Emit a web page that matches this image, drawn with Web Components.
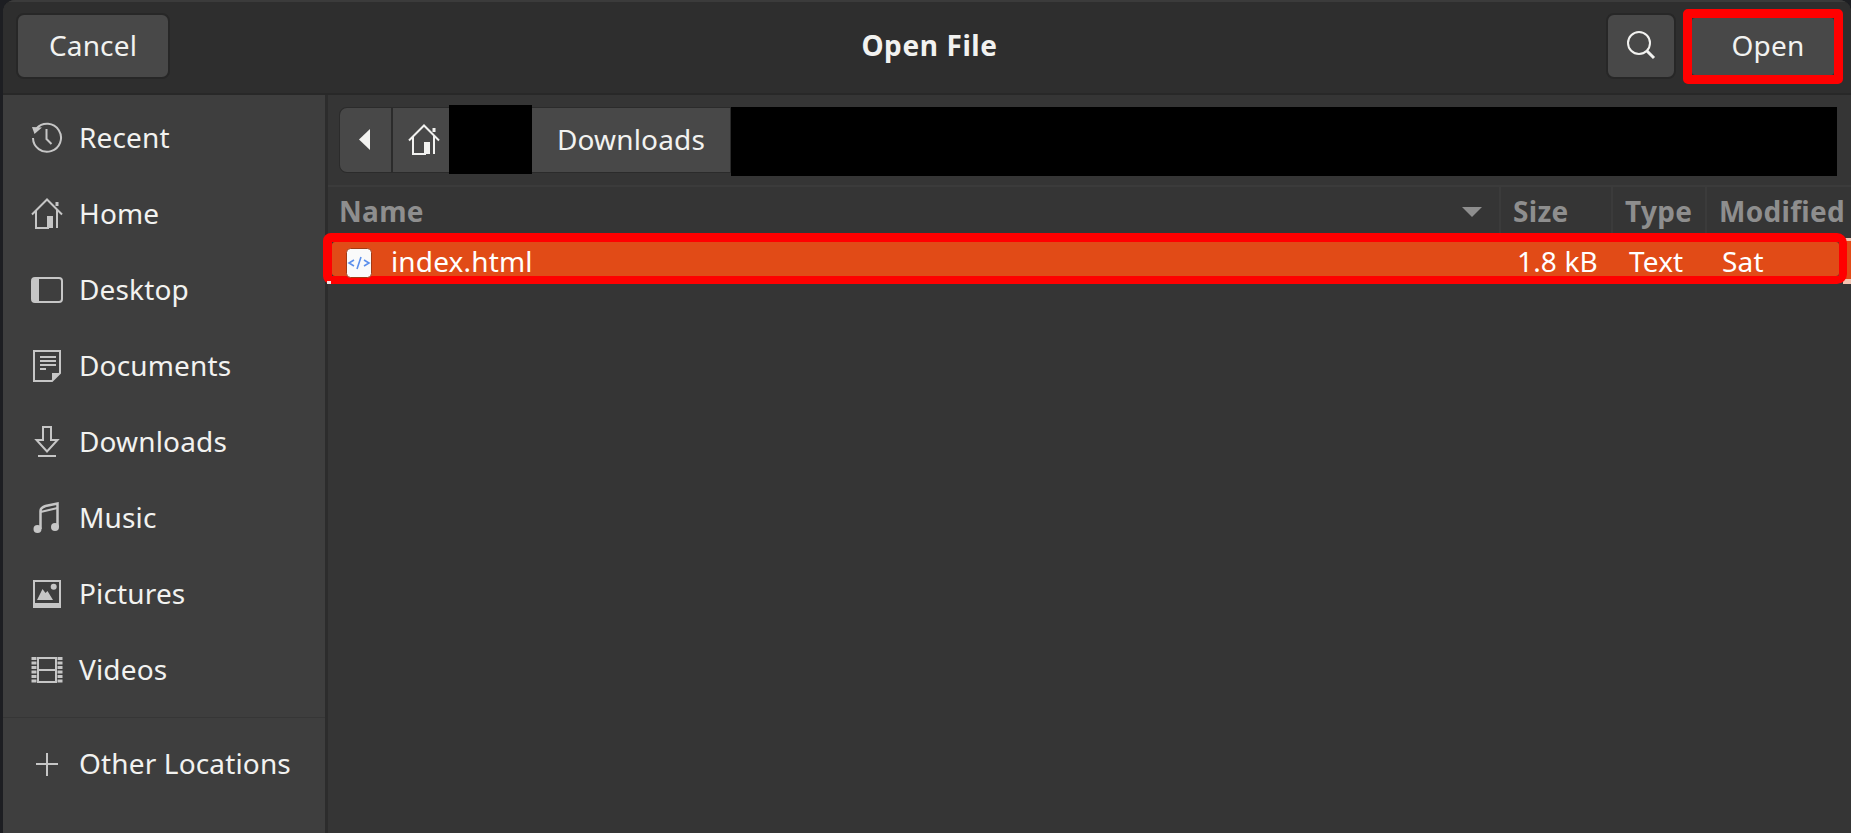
<!DOCTYPE html>
<html><head><meta charset="utf-8"><title>Open File</title>
<style>
html,body{margin:0;height:100%;background:#1d1e22;overflow:hidden}
body{font-family:"Noto Sans","Open Sans",sans-serif;font-size:28px;letter-spacing:.15px;color:#f2f2f0}
</style></head><body>
<file-dialog>
  <dlg-button slot="start" w="154">Cancel</dlg-button>
  <span slot="title">Open File</span>
  <dlg-button slot="end" w="70" icon><svg viewBox="0 0 30 30" width="30" height="30" fill="none" stroke="#f2f2f0" stroke-width="2"><circle cx="13" cy="13" r="11"/><path d="M21 21l7 7" stroke-width="3"/></svg></dlg-button>
  <dlg-button slot="end" w="160" marked>Open</dlg-button>

  <place-row slot="side" icon="recent">Recent</place-row>
  <place-row slot="side" icon="home">Home</place-row>
  <place-row slot="side" icon="desktop">Desktop</place-row>
  <place-row slot="side" icon="documents">Documents</place-row>
  <place-row slot="side" icon="downloads">Downloads</place-row>
  <place-row slot="side" icon="music">Music</place-row>
  <place-row slot="side" icon="pictures">Pictures</place-row>
  <place-row slot="side" icon="videos">Videos</place-row>
  <place-row slot="other" icon="plus">Other Locations</place-row>

  <path-bar slot="path"></path-bar>
  <file-head slot="list"></file-head>
  <file-row slot="list"></file-row>
</file-dialog>

<script>
const G='#c6c6c6';
const ICONS={
recent:`<svg width="32" height="32" viewBox="0 0 32 32" fill="none" stroke="${G}" stroke-width="2"><path d="M5.5 6.500A14 14 0 1 1 2 16"/><path d="M1 5l10 .5-7.500 6.500z" fill="${G}" stroke="none"/><path d="M15.500 7v10l5 5"/></svg>`,
home:`<svg width="32" height="32" viewBox="0 0 32 32" fill="none" stroke="${G}" stroke-width="2"><path d="M1 16.500L16 1.500l15 15"/><path d="M26 4v4" stroke-width="3"/><path d="M5 13v17h13"/><path d="M26 12v18"/><rect x="16" y="18" width="6" height="12" fill="${G}" stroke="none"/></svg>`,
desktop:`<svg width="32" height="32" viewBox="0 0 32 32" fill="none" stroke="${G}" stroke-width="2"><rect x="1" y="4" width="30" height="24" rx="3"/><path d="M3 4h5v24H3a2 2 0 0 1-2-2V6a2 2 0 0 1 2-2z" fill="${G}" stroke="none"/></svg>`,
documents:`<svg width="32" height="32" viewBox="0 0 32 32" fill="none" stroke="${G}" stroke-width="2"><path d="M3 1h26v22l-8 8H3z"/><path d="M21 31v-8h8z" fill="${G}" stroke="none"/><path d="M9 7h16M9 11h16M9 15h16M9 19h6"/></svg>`,
downloads:`<svg width="32" height="32" viewBox="0 0 32 32" fill="none" stroke="${G}" stroke-width="2"><path d="M12 1h8v13h6.500L16 25.500 5.500 14H12z"/><path d="M7 30h18"/></svg>`,
music:`<svg width="32" height="32" viewBox="0 0 32 32" fill="none" stroke="${G}" stroke-width="2.500"><circle cx="6.500" cy="27" r="4" fill="${G}" stroke="none"/><circle cx="24" cy="25" r="4" fill="${G}" stroke="none"/><path d="M9.500 27V9c0-3 2-4 5-5l12-2.500V25"/><path d="M9.500 10l17-4" stroke-width="2"/></svg>`,
pictures:`<svg width="32" height="32" viewBox="0 0 32 32" fill="none" stroke="${G}" stroke-width="2"><path d="M3 3h26v26H3z"/><path d="M2 25h28v5H2z" fill="${G}" stroke="none"/><path d="M6 22l5.500-11 3 4 2-2 5.500 9z" fill="${G}" stroke="none"/><circle cx="22.700" cy="8.700" r="3" fill="${G}" stroke="none"/></svg>`,
videos:`<svg width="32" height="32" viewBox="0 0 32 32" fill="none" stroke="${G}" stroke-width="2"><path d="M7 4h18v24H7zM7 16h18"/><path d="M3 3v26M29 3v26" stroke-width="5" stroke-dasharray="3 1.500"/></svg>`,
plus:`<svg width="32" height="32" viewBox="0 0 32 32" fill="none" stroke="${G}" stroke-width="2"><path d="M16 5v23M5 16h22"/></svg>`
};
function def(name,css,html){
  customElements.define(name,class extends HTMLElement{
    connectedCallback(){
      if(this.shadowRoot)return;
      const r=this.attachShadow({mode:'open'});
      r.innerHTML=`<style>${css}</style>${typeof html==='function'?html(this):html}`;
    }
  });
}
def('file-dialog',`
:host{display:flex;flex-direction:column;height:833px;margin-left:3px;border-radius:12px 12px 0 0;overflow:hidden;background:#353535;box-sizing:border-box}
header{height:93px;flex:none;background:#2e2e2e;border-top:2px solid #3b3b3b;box-sizing:border-box;display:grid;grid-template-columns:1fr auto 1fr;align-items:center;padding:0 8px 3px 13px}
.s{display:flex;align-items:center}.e{display:flex;align-items:center;justify-content:flex-end;gap:7px}
.t{font-weight:700;letter-spacing:.6px;padding:0 0 3px 0}
.rule{height:2px;background:#282828;flex:none}
.body{flex:1;display:flex;min-height:0}
aside{width:325px;flex:none;box-sizing:border-box;background:#3e3e3e;border-right:3px solid #2c2c2c;padding-top:5px;display:flex;flex-direction:column}
.sep{height:1px;background:#363636;margin:9px 0 8px}
main{flex:1;min-width:0;display:flex;flex-direction:column}
.path{height:92px;flex:none;box-sizing:border-box;padding:12px 0 0 11px;border-bottom:2px solid #3b3b3b}
`,`<header><div class="s"><slot name="start"></slot></div><div class="t"><slot name="title"></slot></div><div class="e"><slot name="end"></slot></div></header>
<div class="rule"></div>
<div class="body"><aside><slot name="side"></slot><div class="sep"></div><slot name="other"></slot></aside>
<main><div class="path"><slot name="path"></slot></div><slot name="list"></slot></main></div>`);

def('dlg-button',`
:host{display:block;flex:none}
.m{box-sizing:border-box}
:host([marked]) .m{border:9px solid #ff0000;border-radius:5px;height:75px}
b{font-weight:400;display:flex;align-items:center;justify-content:center;box-sizing:border-box;height:66px;background:#484848;border:2px solid #272727;border-radius:8px;width:100%;padding-bottom:3px}
:host([marked]) b{height:57px;border:0;border-radius:3px;padding:0 0 2px 10px}
`,h=>`<div class="m" style="width:${h.getAttribute('w')}px"><b><slot></slot></b></div>`);

def('place-row',`
:host{display:flex;align-items:center;height:76px;padding-left:28px;box-sizing:border-box}
.i{width:32px;height:32px;flex:none;margin-right:16px;display:block}
.l{margin-top:-3px}
`,h=>`<span class="i">${ICONS[h.getAttribute('icon')]}</span><span class="l"><slot></slot></span>`);

def('path-bar',`
:host{display:flex;align-items:stretch;height:66px}
.seg{background:#484848;display:flex;align-items:center;justify-content:center;box-sizing:border-box;border:1px solid #2b2b2b}
.back{width:54px;border-radius:8px 0 0 8px;border-right:2px solid #2b2b2b;padding-right:2px}
.homeb{width:56px;border-left:0;border-right:0;padding-left:6px}
.dl{width:199px;border-left:0;padding-bottom:2px}
.blk{background:#000;flex:none;margin:-2px 0 -1px}
.b1{width:83px}.b2{width:1106px;margin:0 0 -3px}
`,`<div class="seg back"><svg width="12" height="22" viewBox="0 0 12 22"><path d="M11 0v21L0 10.500z" fill="#f2f2f0"/></svg></div>
<div class="seg homeb"><svg width="32" height="32" viewBox="0 0 32 32" fill="none" stroke="#f2f2f0" stroke-width="2"><path d="M1 16.500L16 1.500l15 15"/><path d="M26 4v4" stroke-width="3"/><path d="M5 13v17h13"/><path d="M26 12v18"/><rect x="16" y="18" width="6" height="12" fill="#f2f2f0" stroke="none"/></svg></div>
<div class="blk b1"></div><div class="seg dl">Downloads</div><div class="blk b2"></div>`);

def('file-head',`
:host{display:grid;grid-template-columns:1173px 112px 94px 1fr;height:46px;font-weight:700;color:#8e8e8e;letter-spacing:.3px}
div{display:flex;align-items:center;box-sizing:border-box;padding:2px 0 0 12px;border-right:2px solid #3b3b3b;white-space:nowrap;overflow:hidden}
.last{border:0}
.name{justify-content:space-between;padding:2px 17px 0 11px}
`,`<div class="name"><span>Name</span><svg width="20" height="10" viewBox="0 0 20 10" style="margin-top:2px"><path d="M0 0h20L10 10z" fill="#8e8e8e"/></svg></div><div>Size</div><div>Type</div><div class="last">Modified</div>`);

def('file-row',`
:host{display:block;position:relative;height:51px}
.o{position:relative;box-sizing:border-box;height:51px;margin:0 4px 0 -5px;border:solid #ff0000;border-width:9px 8px 8px 9px;border-radius:8px 10px 10px 8px}
.r{height:34px;background:#e14b17;border-radius:3px;display:grid;grid-template-columns:59px 1120px 112px 94px 1fr;align-items:center;color:#fff;padding-bottom:4px;box-sizing:border-box}
.r span{white-space:nowrap}
.ic{display:block;padding-left:14px;margin-bottom:-4px}
.sz{padding-left:6px}.ty{padding-left:6px}.mo{padding-left:5px}
.pk{position:absolute;right:0;top:5px;width:8px;height:46px;box-sizing:border-box;background:#e14b17;border:solid #f5c3b1;border-width:3px 0 5px}
.w{position:absolute;left:-1px;bottom:0;width:4px;height:3px;background:#f0e0e0}
`,`<div class="pk"></div><div class="o"><div class="r"><span class="ic"><svg width="26" height="30" viewBox="0 0 26 30" style="display:block"><rect x=".5" y=".5" width="25" height="29" rx="4" fill="#fafafa" stroke="#a33a14"/><g fill="none" stroke="#5c8fec" stroke-width="1.600"><path d="M8 12l-5 3 5 3M18 12l5 3-5 3M15 9l-4 12"/></g></svg></span><span>index.html</span><span class="sz">1.8 kB</span><span class="ty">Text</span><span class="mo">Sat</span></div></div><div class="w"></div>`);
</script>
</body></html>
